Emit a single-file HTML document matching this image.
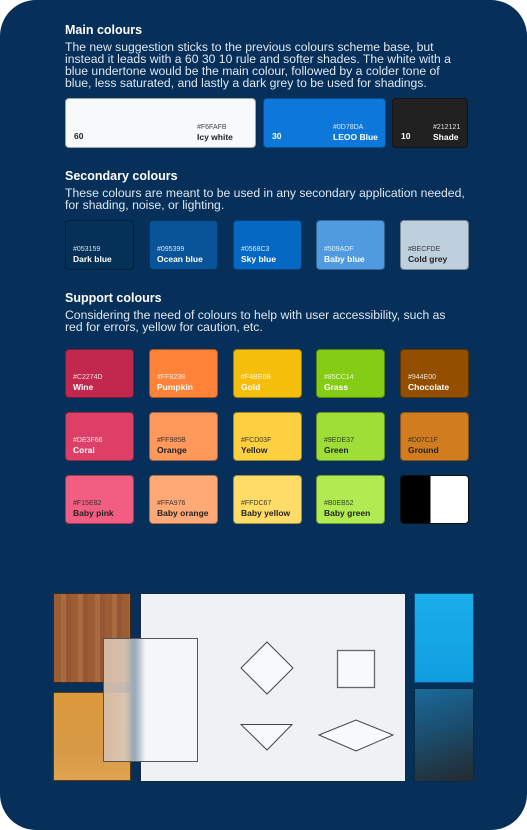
<!DOCTYPE html>
<html><head><meta charset="utf-8"><style>
*{margin:0;padding:0;box-sizing:border-box}
body{width:527px;height:830px;background:#fff;font-family:"Liberation Sans",sans-serif;overflow:hidden}
.page{position:absolute;left:0;top:0;width:527px;height:830px;background:#06305a;border-radius:36px;color:#e8eef5}
.abs{position:absolute}
h2{position:absolute;left:65px;font-size:12.5px;font-weight:bold;color:#fff}
p.t{position:absolute;left:65px;white-space:nowrap;font-size:12.2px;line-height:12px;color:#dfe7f0}
.sw{position:absolute;border-radius:4px;border:1px solid rgba(0,0,0,.35);white-space:nowrap}
.sw .h{position:absolute;left:7px;bottom:16px;font-size:7px;opacity:.85}
.sw .n{position:absolute;left:7px;bottom:5px;font-size:8.5px;font-weight:bold}
.m .num{position:absolute;left:8px;bottom:6px;font-size:8.5px;font-weight:bold}
.w{color:#fff}.d{color:#222}
</style></head><body><div class="page">
<h2 style="top:23px">Main colours</h2>
<p class="t" style="top:41px">The new suggestion sticks to the previous colours scheme base, but<br>instead it leads with a 60 30 10 rule and softer shades. The white with a<br>blue undertone would be the main colour, followed by a colder tone of<br>blue, less saturated, and lastly a dark grey to be used for shadings.</p>

<div class="sw m d" style="left:65px;top:98px;width:191px;height:50px;background:#F6FAFB"><span class="num">60</span><span class="h" style="left:131px">#F6FAFB</span><span class="n" style="left:131px">Icy white</span></div>
<div class="sw m w" style="left:263px;top:98px;width:123px;height:50px;background:#0D78DA"><span class="num">30</span><span class="h" style="left:69px">#0D78DA</span><span class="n" style="left:69px">LEOO Blue</span></div>
<div class="sw m w" style="left:392px;top:98px;width:76px;height:50px;background:#212121"><span class="num">10</span><span class="h" style="left:40px">#212121</span><span class="n" style="left:40px">Shade</span></div>

<h2 style="top:169px">Secondary colours</h2>
<p class="t" style="top:187px">These colours are meant to be used in any secondary application needed,<br>for shading, noise, or lighting.</p>
<div class="sw w" style="left:65px;top:220px;width:69px;height:50px;background:#053159"><span class="h">#053159</span><span class="n">Dark blue</span></div>
<div class="sw w" style="left:149px;top:220px;width:69px;height:50px;background:#095399"><span class="h">#095399</span><span class="n">Ocean blue</span></div>
<div class="sw w" style="left:233px;top:220px;width:69px;height:50px;background:#0568C3"><span class="h">#0568C3</span><span class="n">Sky blue</span></div>
<div class="sw w" style="left:316px;top:220px;width:69px;height:50px;background:#509ADF"><span class="h">#509ADF</span><span class="n">Baby blue</span></div>
<div class="sw d" style="left:400px;top:220px;width:69px;height:50px;background:#BECFDE"><span class="h">#BECFDE</span><span class="n">Cold grey</span></div>

<h2 style="top:291px">Support colours</h2>
<p class="t" style="top:309px">Considering the need of colours to help with user accessibility, such as<br>red for errors, yellow for caution, etc.</p>

<div class="sw w" style="left:65px;top:349px;width:69px;height:49px;background:#C2274D"><span class="h">#C2274D</span><span class="n">Wine</span></div>
<div class="sw w" style="left:149px;top:349px;width:69px;height:49px;background:#FF8238"><span class="h">#FF8238</span><span class="n">Pumpkin</span></div>
<div class="sw w" style="left:233px;top:349px;width:69px;height:49px;background:#F4BE0B"><span class="h">#F4BE0B</span><span class="n">Gold</span></div>
<div class="sw w" style="left:316px;top:349px;width:69px;height:49px;background:#85CC14"><span class="h">#85CC14</span><span class="n">Grass</span></div>
<div class="sw w" style="left:400px;top:349px;width:69px;height:49px;background:#944E00"><span class="h">#944E00</span><span class="n">Chocolate</span></div>

<div class="sw w" style="left:65px;top:412px;width:69px;height:49px;background:#DE3F66"><span class="h">#DE3F66</span><span class="n">Coral</span></div>
<div class="sw d" style="left:149px;top:412px;width:69px;height:49px;background:#FF985B"><span class="h">#FF985B</span><span class="n">Orange</span></div>
<div class="sw d" style="left:233px;top:412px;width:69px;height:49px;background:#FCD03F"><span class="h">#FCD03F</span><span class="n">Yellow</span></div>
<div class="sw d" style="left:316px;top:412px;width:69px;height:49px;background:#9EDE37"><span class="h">#9EDE37</span><span class="n">Green</span></div>
<div class="sw d" style="left:400px;top:412px;width:69px;height:49px;background:#D07C1F"><span class="h">#D07C1F</span><span class="n">Ground</span></div>

<div class="sw d" style="left:65px;top:475px;width:69px;height:49px;background:#F15E82"><span class="h">#F15E82</span><span class="n">Baby pink</span></div>
<div class="sw d" style="left:149px;top:475px;width:69px;height:49px;background:#FFA976"><span class="h">#FFA976</span><span class="n">Baby orange</span></div>
<div class="sw d" style="left:233px;top:475px;width:69px;height:49px;background:#FFDC67"><span class="h">#FFDC67</span><span class="n">Baby yellow</span></div>
<div class="sw d" style="left:316px;top:475px;width:69px;height:49px;background:#B0EB52"><span class="h">#B0EB52</span><span class="n">Baby green</span></div>
<div class="sw" style="left:400px;top:475px;width:69px;height:49px;border:1px solid #111;background:linear-gradient(90deg,#000 0 44%,#fff 44%);"></div>

<div class="abs" style="left:53px;top:593px;width:78px;height:90px;border:1px solid #3a2a18;background:repeating-linear-gradient(90deg,#9c5c34 0 7px,#a86b40 7px 12px,#955733 12px 17px);"></div>
<div class="abs" style="left:53px;top:692px;width:78px;height:89px;border:1px solid #5a3a10;background:linear-gradient(180deg,#dc9a3c,#d89a48 70%,#e0a450);"></div>
<div class="abs" style="left:140px;top:593px;width:266px;height:189px;background:#eef2f5;border:1px solid #1b2a3a"></div>
<div class="abs" style="left:103px;top:638px;width:95px;height:124px;border:1px solid #555;background:linear-gradient(90deg,rgba(215,190,170,.95) 0,rgba(220,200,185,.9) 22%,rgba(160,175,190,.95) 33%,rgba(244,247,249,.98) 45%,#f4f7f9);"></div>
<svg class="abs" style="left:0;top:0" width="527" height="830">
<g fill="#f7fafb" stroke="#444" stroke-width="1">
<polygon points="267,642 293,668 267,694 241,668"/>
<rect x="337.5" y="650.5" width="37" height="37" stroke="#666" stroke-width="1.3"/>
<polygon points="241,724.5 292,724.5 267,750"/>
<polygon points="319,735 356,720 393,735 356,751"/>
</g></svg>
<div class="abs" style="left:414px;top:593px;width:60px;height:90px;border:1px solid #0b4f7a;background:linear-gradient(180deg,#1aaeea,#109ee0);"></div>
<div class="abs" style="left:414px;top:688px;width:60px;height:94px;border:1px solid #0a2b45;background:linear-gradient(160deg,#1a6b9a 0,#1b4d6e 45%,#242a2e 100%);"></div>
</div></body></html>
